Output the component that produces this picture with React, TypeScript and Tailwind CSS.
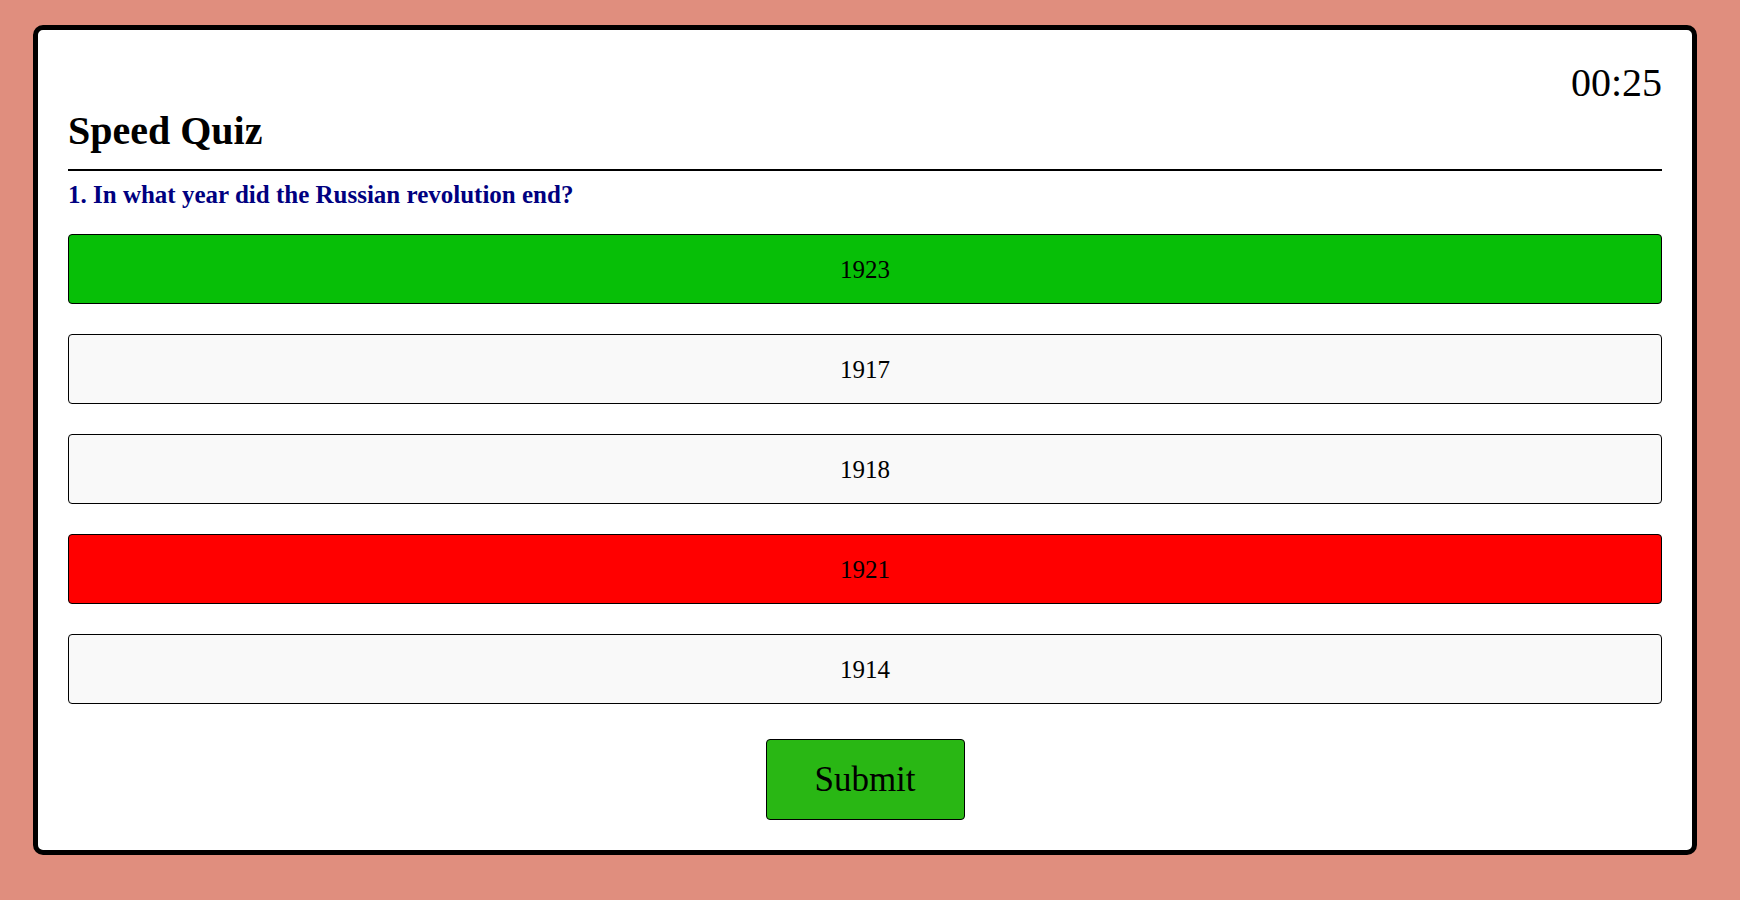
const options = [
  { label: '1923', tone: 'correct' },
  { label: '1917', tone: 'idle' },
  { label: '1918', tone: 'idle' },
  { label: '1921', tone: 'wrong' },
  { label: '1914', tone: 'idle' },
];

const toneClass: Record<string, string> = {
  correct: 'bg-[#07bf07]',
  wrong: 'bg-[#ff0000]',
  idle: 'bg-[#f9f9f9]',
};

export default function App() {
  return (
    <div className="min-h-screen bg-[#e08e7e] pl-[33px] pr-[43px] pt-[25px] pb-[44px] font-['Liberation_Serif',serif] text-black">
      <div className="rounded-[10px] border-[5px] border-black bg-white px-[30px] pb-[30px]">
        {/* Timer */}
        <div className="mt-[33px] text-right text-[40px] leading-none">00:25</div>

        {/* Header */}
        <h1 className="mt-[8px] text-[40px] font-bold leading-none">Speed Quiz</h1>
        <div className="mt-[18px] h-[2px] bg-black" />

        <p className="mt-[11px] text-[25px] font-bold leading-none text-[#000080]">
          1. In what year did the Russian revolution end?
        </p>

        {/* Answers */}
        <div className="mt-[27px] flex flex-col gap-[30px]">
          {options.map((opt) => (
            <button
              key={opt.label}
              className={`flex h-[70px] w-full items-center justify-center rounded-[4px] border border-black text-[25px] leading-none ${toneClass[opt.tone]}`}
            >
              {opt.label}
            </button>
          ))}
        </div>

        <div className="mt-[35px] flex justify-center">
          <button className="flex h-[81px] w-[199px] items-center justify-center rounded-[4px] border border-black bg-[#29b714] text-[35px] leading-none">
            Submit
          </button>
        </div>
      </div>
    </div>
  );
}
